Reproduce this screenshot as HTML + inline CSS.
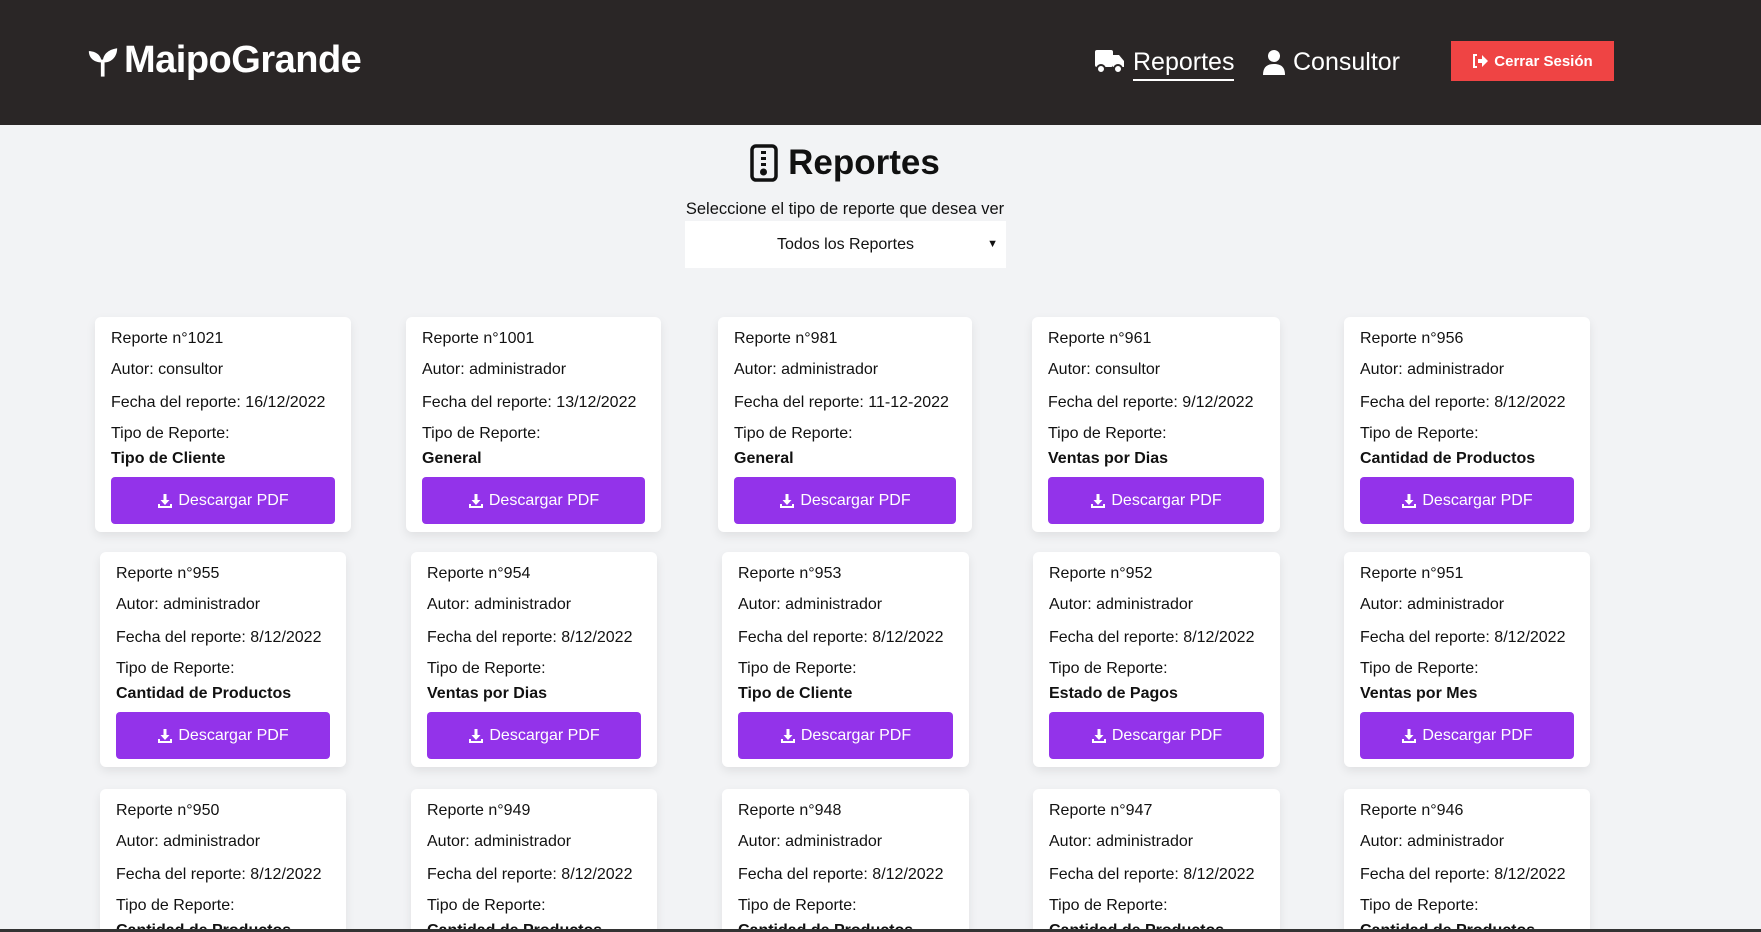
<!DOCTYPE html>
<html style="height:932px;overflow:hidden"><head><meta charset="utf-8"><style>
*{margin:0;padding:0;box-sizing:border-box}
body{width:1761px;height:932px;overflow:hidden;background:#f2f3f5;font-family:"Liberation Sans",sans-serif;color:#111;position:relative}
.hdr{position:absolute;left:0;top:0;width:1761px;height:125px;background:#2a2626;color:#fff}
.logo{position:absolute;left:86px;top:39px;font-size:38px;font-weight:bold;display:flex;align-items:center;gap:4px;letter-spacing:-0.5px}
.nav{position:absolute;top:45px;font-size:25px;display:flex;align-items:center;gap:8px;height:34px}
.btn-out{position:absolute;left:1451px;top:41px;width:163px;height:40px;background:#ef4444;color:#fff;font-weight:bold;font-size:15px;display:flex;align-items:center;justify-content:center;gap:6px}
.title{position:absolute;left:0;width:1690px;top:143px;text-align:center;font-size:35px;font-weight:bold;display:flex;justify-content:center;align-items:center;gap:10px}
.sub{position:absolute;left:0;width:1690px;top:200px;text-align:center;font-size:16.5px}
.sel{position:absolute;left:685px;top:221px;width:321px;height:47px;background:#fff;font-size:16px;display:flex;align-items:center;justify-content:center}
.sel span.ar{position:absolute;right:8px;top:17px;font-size:11px}
.card{position:absolute;height:215px;background:#fff;border-radius:6px;box-shadow:0 4px 10px rgba(0,0,0,.08);padding:0 16px;overflow:hidden}
.card .l{position:absolute;left:16px;font-size:16px;white-space:nowrap}
.card .b{font-weight:bold}
.card .pb{position:absolute;left:16px;right:16px;top:160px;height:47px;background:#9333ea;border-radius:4px;color:#fff;font-size:16px;display:flex;align-items:center;justify-content:center;gap:5px}
.bot{position:absolute;left:0;top:929px;width:1761px;height:3px;background:#333}
</style></head><body>
<div class="hdr">
 <div class="logo"><svg width="34" height="34" viewBox="0 0 24 24"><path d="M11 22V13C6 13 2 10 2 5c5 0 9 3 9 8" fill="#fff"/><path d="M12 22V12c0-4 3-8 10-9 0 6-4 10-9 10" fill="#fff"/><rect x="10.5" y="11" width="2.6" height="12" fill="#fff"/></svg>MaipoGrande</div>
 <div class="nav" style="left:1095px"><svg width="30" height="24" viewBox="0 0 30 24"><rect x="0" y="0" width="18" height="17" rx="2" fill="#fff"/><path d="M18 5h6l5 6v6H18z" fill="#fff"/><circle cx="6" cy="19" r="4" fill="#fff" stroke="#2a2626" stroke-width="2"/><circle cx="23" cy="19" r="4" fill="#fff" stroke="#2a2626" stroke-width="2"/></svg><span style="border-bottom:2px solid #fff;padding-bottom:2px;margin-top:4px">Reportes</span></div>
 <div class="nav" style="left:1263px"><svg width="22" height="26" viewBox="0 0 22 26"><circle cx="11" cy="7" r="6" fill="#fff"/><path d="M0 26c0-8 4-11 11-11s11 3 11 11z" fill="#fff"/></svg><span style="margin-top:0px">Consultor</span></div>
 <div class="btn-out"><svg width="16" height="14" viewBox="0 0 16 14"><path d="M5 1H2v12h3" stroke="#fff" stroke-width="2" fill="none"/><path d="M6 5h4V1l6 6-6 6V9H6z" fill="#fff"/></svg>Cerrar Sesión</div>
</div>
<div class="title"><svg width="28" height="38" viewBox="0 0 28 38"><rect x="2" y="2" width="24" height="34" rx="4" fill="none" stroke="#111" stroke-width="3.5"/><rect x="11" y="7" width="5" height="3" fill="#111"/><rect x="11" y="13" width="5" height="3" fill="#111"/><rect x="11" y="19" width="5" height="3" fill="#111"/><circle cx="13.5" cy="28" r="3.5" fill="#111"/></svg><span>Reportes</span></div>
<div class="sub">Seleccione el tipo de reporte que desea ver</div>
<div class="sel">Todos los Reportes<span class="ar">&#9660;</span></div>
<div id="c"></div>
<div class="bot"></div>
<script>
var xs1=[[95,256],[406,255],[718,254],[1032,248],[1344,246]];
var xs2=[[100,246],[411,246],[722,247],[1033,247],[1344,246]];
var d=[
["1021","consultor","16/12/2022","Tipo de Cliente"],["1001","administrador","13/12/2022","General"],["981","administrador","11-12-2022","General"],["961","consultor","9/12/2022","Ventas por Dias"],["956","administrador","8/12/2022","Cantidad de Productos"],
["955","administrador","8/12/2022","Cantidad de Productos"],["954","administrador","8/12/2022","Ventas por Dias"],["953","administrador","8/12/2022","Tipo de Cliente"],["952","administrador","8/12/2022","Estado de Pagos"],["951","administrador","8/12/2022","Ventas por Mes"],
["950","administrador","8/12/2022","Cantidad de Productos"],["949","administrador","8/12/2022","Cantidad de Productos"],["948","administrador","8/12/2022","Cantidad de Productos"],["947","administrador","8/12/2022","Cantidad de Productos"],["946","administrador","8/12/2022","Cantidad de Productos"]];
var tops=[317,552,789],h="";
var dl='<svg width="16" height="16" viewBox="0 0 16 16"><path d="M6.5 1h3v6h3l-4.5 5-4.5-5h3z" fill="#fff"/><path d="M1 11v4h14v-4h-2v2H3v-2z" fill="#fff"/></svg>';
for(var i=0;i<15;i++){var r=Math.floor(i/5),c=i%5,p=(r==0?xs1:xs2)[c],t=d[i];
h+='<div class="card" style="left:'+p[0]+'px;top:'+tops[r]+'px;width:'+p[1]+'px'+(r==2?';height:143px;border-radius:6px 6px 0 0':'')+'">'+
'<div class="l" style="top:13px">Reporte n°'+t[0]+'</div>'+
'<div class="l" style="top:44px">Autor: '+t[1]+'</div>'+
'<div class="l" style="top:77px">Fecha del reporte: '+t[2]+'</div>'+
'<div class="l" style="top:108px">Tipo de Reporte:</div>'+
'<div class="l b" style="top:133px">'+t[3]+'</div>'+
'<div class="pb">'+dl+'Descargar PDF</div></div>';}
document.getElementById('c').innerHTML=h;
</script>
</body></html>
